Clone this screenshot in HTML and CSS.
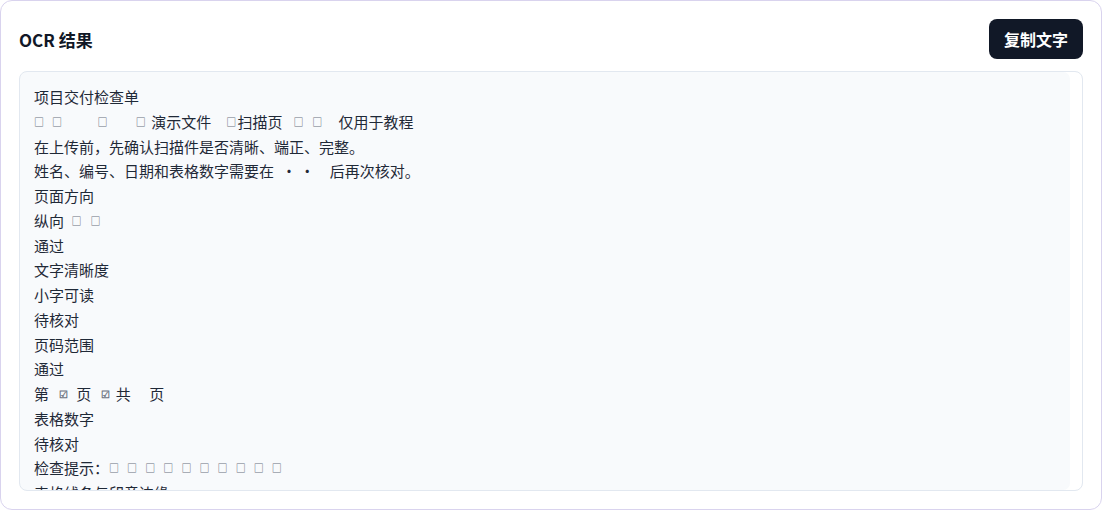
FILE: index.html
```html
<!DOCTYPE html>
<html lang="zh-CN">
<head>
<meta charset="utf-8">
<title>OCR 结果</title>
<link rel="stylesheet" href="styles.css">
</head>
<body>
<section class="card">
  <header class="card-head">
    <h2 class="card-title">OCR 结果</h2>
    <button class="copy-btn" type="button">复制文字</button>
  </header>
  <div class="ocr-text">项目交付检查单
<span class="box">□</span>   <span class="box">□</span>&#x3000;&#x3000;&#x2002;<span class="box">□</span>&#x3000;&#x3000;<span class="box">□</span>&#x2002;演示文件&#x3000;<span class="box">□</span> 扫描页 &#x2002;<span class="box">□</span> &#x2002;<span class="box">□</span>&#x3000; 仅用于教程
在上传前，先确认扫描件是否清晰、端正、完整。
姓名、编号、日期和表格数字需要在&#x2002;· ·&#x3000;后再次核对。
页面方向
纵向&#x2002;<span class="box">□</span>&#x2002; <span class="box">□</span>
通过
文字清晰度
小字可读
待核对
页码范围
通过
第   <span class="box">☑</span>   页   <span class="box">☑</span>&#x2002;共&#x3000; 页
表格数字
待核对
检查提示：<span class="box">□</span>   <span class="box">□</span>   <span class="box">□</span>   <span class="box">□</span>   <span class="box">□</span>   <span class="box">□</span>   <span class="box">□</span>   <span class="box">□</span>   <span class="box">□</span>   <span class="box">□</span>
表格线条与印章边缘
</div>
</section>
</body>
</html>
```

FILE: styles.css
```css
* { box-sizing: border-box; }

html, body {
  margin: 0;
  padding: 0;
  background: #ffffff;
}

body {
  font-family: "Noto Sans CJK SC", "Noto Sans", sans-serif;
  color: #1f2937;
}

.card {
  width: 1102px;
  height: 510px;
  border: 1px solid #d9d3ee;
  border-radius: 12px;
  background: #ffffff;
  padding: 18px;
  display: flex;
  flex-direction: column;
  gap: 12px;
}

.card-head {
  display: flex;
  align-items: center;
  justify-content: space-between;
  height: 40px;
  flex: none;
}

.card-title {
  margin: 0;
  font-size: 17px;
  font-weight: 700;
  color: #111827;
  line-height: 1;
}

.copy-btn {
  height: 40px;
  padding: 0 15px;
  border: none;
  border-radius: 8px;
  background: #111827;
  color: #ffffff;
  font-family: "Noto Sans CJK SC", "Noto Sans", sans-serif;
  font-size: 16px;
  font-weight: 700;
  line-height: 1;
}

.ocr-text {
  flex: 1;
  min-height: 0;
  overflow: hidden;
  white-space: pre-wrap;
  border: 1px solid #e2e8f0;
  border-radius: 8px;
  background: #f8fafc;
  box-shadow: inset -12px 0 0 #ffffff;
  padding: 13px 26px 13px 14px;
  font-size: 15px;
  line-height: 1.65;
  color: #1f2937;
}

.box {
  font-size: 10px;
  font-weight: 700;
  letter-spacing: -2px;
  vertical-align: 2px;
  color: #6b7280;
}
```
